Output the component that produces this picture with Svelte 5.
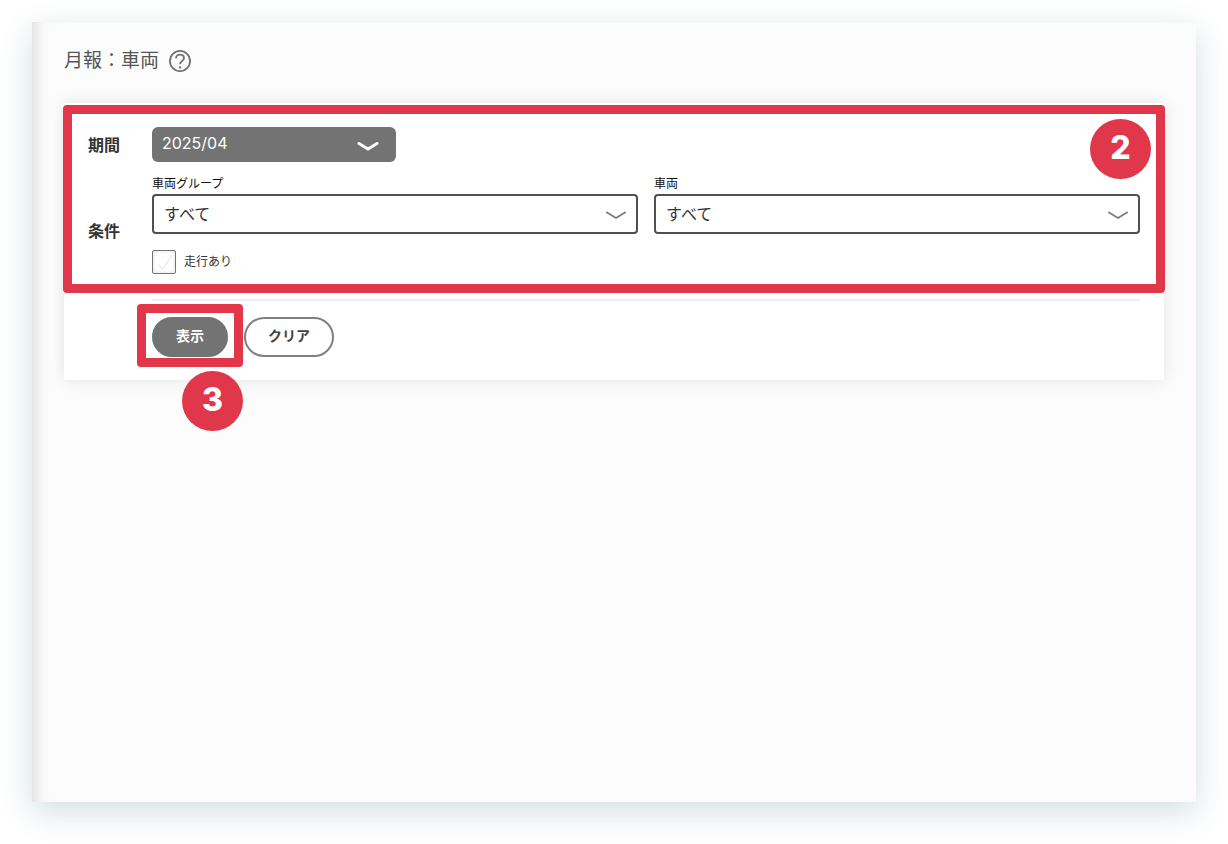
<script lang="ts">
  let month = $state('2025/04');
  let group = $state('all');
  let vehicle = $state('all');
  let running = $state(false);

  function clear() {
    month = '2025/04';
    group = 'all';
    vehicle = 'all';
    running = false;
  }
</script>

{#snippet chevron()}
  <svg class="chevron" viewBox="0 0 22 12" aria-hidden="true">
    <path d="M2 2.5 11 8 20 2.5" />
  </svg>
{/snippet}

<main class="page">
  <header class="title">
    <h1>月報：車両</h1>
    <button class="help" aria-label="ヘルプ">
      <svg viewBox="0 0 22 22" aria-hidden="true">
        <circle cx="11" cy="11" r="10.1" />
        <path d="M7 8.300C7 6 8.700 4.600 11 4.600s4 1.400 4 3.500c0 1.600-1 2.400-2.100 3.100-1.300.8-1.800 1.300-1.800 3" />
        <circle class="dot" cx="11.100" cy="17.400" r="1.200" />
      </svg>
    </button>
  </header>

  <form class="card" onsubmit={(e) => e.preventDefault()}>
    <div class="conditions">
      <div class="row">
        <label class="row-label" for="month">期間</label>
        <div class="select month">
          <select id="month" bind:value={month}>
            <option value="2025/04">2025/04</option>
          </select>
          {@render chevron()}
        </div>
      </div>

      <div class="row">
        <span class="row-label offset">条件</span>
        <div class="fields">
          <div class="field">
            <label for="group">車両グループ</label>
            <div class="select">
              <select id="group" bind:value={group}>
                <option value="all">すべて</option>
              </select>
              {@render chevron()}
            </div>
          </div>
          <div class="field">
            <label for="vehicle">車両</label>
            <div class="select">
              <select id="vehicle" bind:value={vehicle}>
                <option value="all">すべて</option>
              </select>
              {@render chevron()}
            </div>
          </div>
          <label class="check">
            <span class="box">
              <input type="checkbox" bind:checked={running} />
              <svg class:on={running} viewBox="0 0 24 24" aria-hidden="true">
                <path d="M6 14.500 10.500 19 20 5.500" />
              </svg>
            </span>
            走行あり
          </label>
        </div>
      </div>

      <div class="frame"></div>
      <span class="badge badge-conditions">2</span>
    </div>

    <div class="actions">
      <div class="submit">
        <button class="btn primary" type="submit">表示</button>
        <div class="frame"></div>
        <span class="badge badge-submit">3</span>
      </div>
      <button class="btn" type="button" onclick={clear}>クリア</button>
    </div>
  </form>
</main>

<style>
  :global(body) { background: #fff; }

  .page {
    box-sizing: border-box;
    min-height: calc(100vh - 64px);
    margin: 22px 32px 42px;
    padding: 26px 32px 32px;
    background: #fcfcfc;
    box-shadow: inset 14px 0 16px -12px rgba(0, 0, 0, .16), 0 10px 30px rgba(20, 100, 115, .2);
    color: #333;
    font-family: Inter, "Noto Sans CJK JP", sans-serif;
  }

  .title { display: flex; align-items: center; gap: 10px; height: 26px; margin-bottom: 29px; }
  h1 { margin: 0; font-size: 19px; font-weight: 400; line-height: 28px; color: #555; }
  .help { display: block; width: 22px; height: 22px; padding: 0; border: 0; background: none; cursor: pointer; }
  .help svg { display: block; fill: none; stroke: #737373; stroke-width: 1.9; }
  .help .dot { fill: #737373; stroke: none; }

  .card { background: #fff; box-shadow: 0 0 16px rgba(0, 0, 0, .1); }
  .conditions { position: relative; display: grid; gap: 12px; padding: 24px 24px 25px; }
  .row { display: grid; grid-template-columns: 64px 1fr; align-items: center; }
  .row-label { font-size: 16px; line-height: 24px; font-weight: 700; }
  .offset { padding-top: 14px; }

  .fields { display: grid; grid-template-columns: 1fr 1fr; gap: 16px; }
  .field label { display: block; font-size: 12px; line-height: 20px; color: #111; }

  .select { position: relative; }
  select {
    display: block;
    box-sizing: border-box;
    width: 100%;
    height: 40px;
    padding: 0 40px 0 10px;
    appearance: none;
    border: 2px solid #505050;
    border-radius: 4px;
    background: #fff;
    color: #333;
    font-family: inherit;
    font-size: 16px;
  }
  .chevron {
    position: absolute;
    top: 50%;
    right: 11px;
    width: 22px;
    height: 12px;
    margin-top: -4px;
    fill: none;
    stroke: #808080;
    stroke-width: 2;
    stroke-linecap: round;
    stroke-linejoin: round;
    pointer-events: none;
  }
  .month { width: 244px; }
  .month select { height: 35px; padding-bottom: 3px; border: 0; border-radius: 6px; background: #737373; color: #fff; }
  .month .chevron { right: 17px; stroke: #fff; stroke-width: 3; }

  .check { display: flex; align-items: center; gap: 8px; font-size: 12px; line-height: 18px; }
  .box { position: relative; width: 24px; height: 24px; }
  .box input {
    display: block;
    width: 24px;
    height: 24px;
    box-sizing: border-box;
    margin: 0;
    appearance: none;
    border: 1px solid #737373;
    border-radius: 2px;
    background: #fff;
    box-shadow: inset 0 0 4px rgba(0, 0, 0, .12);
  }
  .box svg { position: absolute; inset: 0; fill: none; stroke: #eee; stroke-width: 1.5; pointer-events: none; }
  .box svg.on { stroke: #333; }

  .actions { display: flex; gap: 16px; margin: 0 24px 0 88px; padding: 16px 0 23px; border-top: 2px solid #eee; }
  .submit { position: relative; }
  .btn {
    height: 40px;
    padding: 0 22px 4px;
    border: 2px solid #808080;
    border-radius: 20px;
    background: #fff;
    color: #444;
    font-family: inherit;
    font-size: 14px;
    font-weight: 700;
    cursor: pointer;
  }
  .primary { border-color: #737373; background: #737373; color: #fff; }

  /* red guide marks over the form */
  .frame { position: absolute; inset: 2px -1px 6px; border: 9px solid #e1374b; border-radius: 4px; pointer-events: none; }
  .submit .frame { inset: -13px -15px -10px; }
  .badge {
    position: absolute;
    width: 61px;
    height: 60px;
    border-radius: 50%;
    background: #e1374b;
    color: #fff;
    font-size: 32px;
    font-weight: 800;
    line-height: 58px;
    text-align: center;
    pointer-events: none;
  }
  .badge-conditions { top: 16px; right: 13px; }
  .badge-submit { top: 54px; left: 30px; }
</style>
